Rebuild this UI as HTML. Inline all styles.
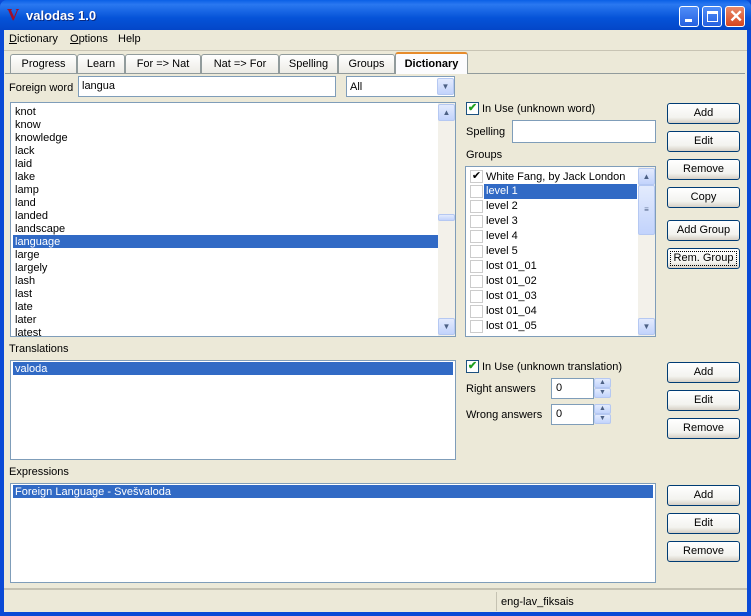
<!DOCTYPE html>
<html><head><meta charset="utf-8"><style>
*{margin:0;padding:0;box-sizing:border-box}
body{width:751px;height:616px;overflow:hidden;background:#0a4ad6;font-family:"Liberation Sans",Tahoma,sans-serif;font-size:11px;color:#000;position:relative}
.a{position:absolute}
.title{left:0;top:0;width:751px;height:30px;background:linear-gradient(#0a5fe6,#2a78f0 15%,#0553d8 60%,#0346c8);border-radius:7px 7px 0 0}
.client{left:4px;top:30px;width:743px;height:582px;background:#ece9d8}
.tb{width:20px;height:21px;top:6px;border:1px solid #fff;border-radius:3px;background:linear-gradient(#4f8df8,#2460e0)}
.tab{top:54px;height:19px;border:1px solid #919b9c;border-bottom:none;border-radius:3px 3px 0 0;background:linear-gradient(#fff,#ecebe5);text-align:center;line-height:18px}
.box{background:#fff;border:1px solid #7f9db9}
.btn{width:73px;height:21px;border:1px solid #003c74;border-radius:3px;background:linear-gradient(#fff,#f3f3ef 70%,#d6d0c5);text-align:center;line-height:19px;left:667px}
.sel{background:#316ac5;color:#fff}
.row{position:absolute;left:2px;height:13px;line-height:14px;padding-left:2px}
.sb{background:#f3f1ea}
.arr{width:17px;height:17px;border:1px solid #b5c8f2;border-radius:2px;background:linear-gradient(#e3ebfd,#c2d3fc);color:#4d6185;font-size:8px;text-align:center;line-height:15px}
.cb{width:13px;height:13px;border:1px solid #1c5180;background:#fff;color:#21a121;font-size:11px;line-height:11px;text-align:center;font-weight:bold}
.gcb{position:absolute;left:4px;width:13px;height:13px;border:1px solid #ccc;background:#fff;font-size:11px;line-height:11px;text-align:center}
</style></head><body>
<div class="a title"></div>
<div class="a" style="left:7px;top:5px;color:#a0102a;font:bold 17px 'Liberation Serif',serif">V</div>
<div class="a" style="left:26px;top:8px;color:#fff;font-weight:bold;font-size:13px;text-shadow:1px 1px #0a2a80">valodas 1.0</div>
<div class="a tb" style="left:679px"><div class="a" style="left:5px;top:12px;width:7px;height:3px;background:#fff"></div></div>
<div class="a tb" style="left:702px"><div class="a" style="left:4px;top:4px;width:11px;height:11px;border:1px solid #fff;border-top:3px solid #fff"></div></div>
<div class="a tb" style="left:725px;background:linear-gradient(#e88a6a,#d8451e)"><div class="a" style="left:3px;top:0px;color:#fff;font-size:17px;font-weight:bold;line-height:20px">✕</div></div>
<div class="a client"></div>
<div class="a" style="left:9px;top:33px"><u>D</u>ictionary</div>
<div class="a" style="left:70px;top:33px"><u>O</u>ptions</div>
<div class="a" style="left:118px;top:33px">Help</div>
<div class="a" style="left:4px;top:50px;width:743px;height:1px;background:#c8c4b4"></div>
<div class="a" style="left:5px;top:73px;width:740px;height:1px;background:#919b9c"></div>
<div class="a tab" style="left:10px;width:67px">Progress</div>
<div class="a tab" style="left:77px;width:48px">Learn</div>
<div class="a tab" style="left:125px;width:76px">For =&gt; Nat</div>
<div class="a tab" style="left:201px;width:78px">Nat =&gt; For</div>
<div class="a tab" style="left:279px;width:59px">Spelling</div>
<div class="a tab" style="left:338px;width:57px">Groups</div>
<div class="a tab" style="left:395px;top:52px;height:22px;width:73px;background:#fcfcfe;font-weight:bold;border-top:2px solid #e68b2c;line-height:20px">Dictionary</div>

<div class="a" style="left:9px;top:82px">Foreign word</div>
<div class="a box" style="left:78px;top:76px;width:258px;height:21px;padding:3px 3px">langua</div>
<div class="a box" style="left:346px;top:76px;width:109px;height:21px;padding:4px 3px">All</div>
<div class="a arr" style="left:437px;top:78px;line-height:15px">▼</div>

<div class="a box" style="left:10px;top:102px;width:446px;height:235px;overflow:hidden">
<div class="row" style="top:2px">knot</div><div class="row" style="top:15px">know</div><div class="row" style="top:28px">knowledge</div><div class="row" style="top:41px">lack</div><div class="row" style="top:54px">laid</div><div class="row" style="top:67px">lake</div><div class="row" style="top:80px">lamp</div><div class="row" style="top:93px">land</div><div class="row" style="top:106px">landed</div><div class="row" style="top:119px">landscape</div><div class="row sel" style="top:132px;width:425px">language</div><div class="row" style="top:145px">large</div><div class="row" style="top:158px">largely</div><div class="row" style="top:171px">lash</div><div class="row" style="top:184px">last</div><div class="row" style="top:197px">late</div><div class="row" style="top:210px">later</div><div class="row" style="top:223px">latest</div>
<div class="a sb" style="left:427px;top:0;width:17px;height:233px"></div>
<div class="a arr" style="left:427px;top:1px">▲</div>
<div class="a arr" style="left:427px;top:215px">▼</div>
<div class="a arr" style="left:427px;top:111px;height:7px"></div>
</div>

<div class="a cb" style="left:466px;top:102px">✔</div>
<div class="a" style="left:482px;top:103px">In Use (unknown word)</div>
<div class="a" style="left:466px;top:126px">Spelling</div>
<div class="a box" style="left:512px;top:120px;width:144px;height:23px"></div>
<div class="a" style="left:466px;top:149px">Groups</div>
<div class="a box" style="left:465px;top:166px;width:191px;height:171px;overflow:hidden">
<div class="gcb" style="top:3px;color:#000">✔</div><div class="row" style="left:18px;top:3px;height:15px;line-height:15px">White Fang, by Jack London</div>
<div class="gcb" style="top:18px"></div><div class="row sel" style="left:18px;top:17px;height:15px;line-height:15px;width:153px">level 1</div>
<div class="gcb" style="top:33px"></div><div class="row" style="left:18px;top:32px;height:15px;line-height:15px">level 2</div>
<div class="gcb" style="top:48px"></div><div class="row" style="left:18px;top:47px;height:15px;line-height:15px">level 3</div>
<div class="gcb" style="top:63px"></div><div class="row" style="left:18px;top:62px;height:15px;line-height:15px">level 4</div>
<div class="gcb" style="top:78px"></div><div class="row" style="left:18px;top:77px;height:15px;line-height:15px">level 5</div>
<div class="gcb" style="top:93px"></div><div class="row" style="left:18px;top:92px;height:15px;line-height:15px">lost 01_01</div>
<div class="gcb" style="top:108px"></div><div class="row" style="left:18px;top:107px;height:15px;line-height:15px">lost 01_02</div>
<div class="gcb" style="top:123px"></div><div class="row" style="left:18px;top:122px;height:15px;line-height:15px">lost 01_03</div>
<div class="gcb" style="top:138px"></div><div class="row" style="left:18px;top:137px;height:15px;line-height:15px">lost 01_04</div>
<div class="gcb" style="top:153px"></div><div class="row" style="left:18px;top:152px;height:15px;line-height:15px">lost 01_05</div>
<div class="a sb" style="left:172px;top:0;width:17px;height:169px"></div>
<div class="a arr" style="left:172px;top:1px">▲</div>
<div class="a arr" style="left:172px;top:151px">▼</div>
<div class="a arr" style="left:172px;top:18px;height:50px;line-height:48px">≡</div>
</div>

<div class="a btn" style="top:103px">Add</div>
<div class="a btn" style="top:131px">Edit</div>
<div class="a btn" style="top:159px">Remove</div>
<div class="a btn" style="top:187px">Copy</div>
<div class="a btn" style="top:220px">Add Group</div>
<div class="a btn" style="top:248px;outline:1px dotted #000;outline-offset:-4px">Rem. Group</div>

<div class="a" style="left:9px;top:343px">Translations</div>
<div class="a box" style="left:10px;top:360px;width:446px;height:100px"><div class="row sel" style="top:1px;width:440px">valoda</div></div>
<div class="a cb" style="left:466px;top:360px">✔</div>
<div class="a" style="left:482px;top:361px">In Use (unknown translation)</div>
<div class="a" style="left:466px;top:383px">Right answers</div>
<div class="a box" style="left:551px;top:378px;width:43px;height:21px;padding:3px 4px">0</div>
<div class="a arr" style="left:594px;top:378px;height:10px;line-height:8px;font-size:7px">▲</div>
<div class="a arr" style="left:594px;top:388px;height:10px;line-height:8px;font-size:7px">▼</div>
<div class="a" style="left:466px;top:409px">Wrong answers</div>
<div class="a box" style="left:551px;top:404px;width:43px;height:21px;padding:3px 4px">0</div>
<div class="a arr" style="left:594px;top:404px;height:10px;line-height:8px;font-size:7px">▲</div>
<div class="a arr" style="left:594px;top:414px;height:10px;line-height:8px;font-size:7px">▼</div>
<div class="a btn" style="top:362px">Add</div>
<div class="a btn" style="top:390px">Edit</div>
<div class="a btn" style="top:418px">Remove</div>

<div class="a" style="left:9px;top:466px">Expressions</div>
<div class="a box" style="left:10px;top:483px;width:646px;height:100px"><div class="row sel" style="top:1px;width:640px">Foreign Language - Svešvaloda</div></div>
<div class="a btn" style="top:485px">Add</div>
<div class="a btn" style="top:513px">Edit</div>
<div class="a btn" style="top:541px">Remove</div>

<div class="a" style="left:4px;top:588px;width:743px;height:2px;background:#c5c2b2"></div>
<div class="a" style="left:496px;top:592px;width:1px;height:19px;background:#c5c2b2"></div>
<div class="a" style="left:501px;top:596px">eng-lav_fiksais</div>
</body></html>
